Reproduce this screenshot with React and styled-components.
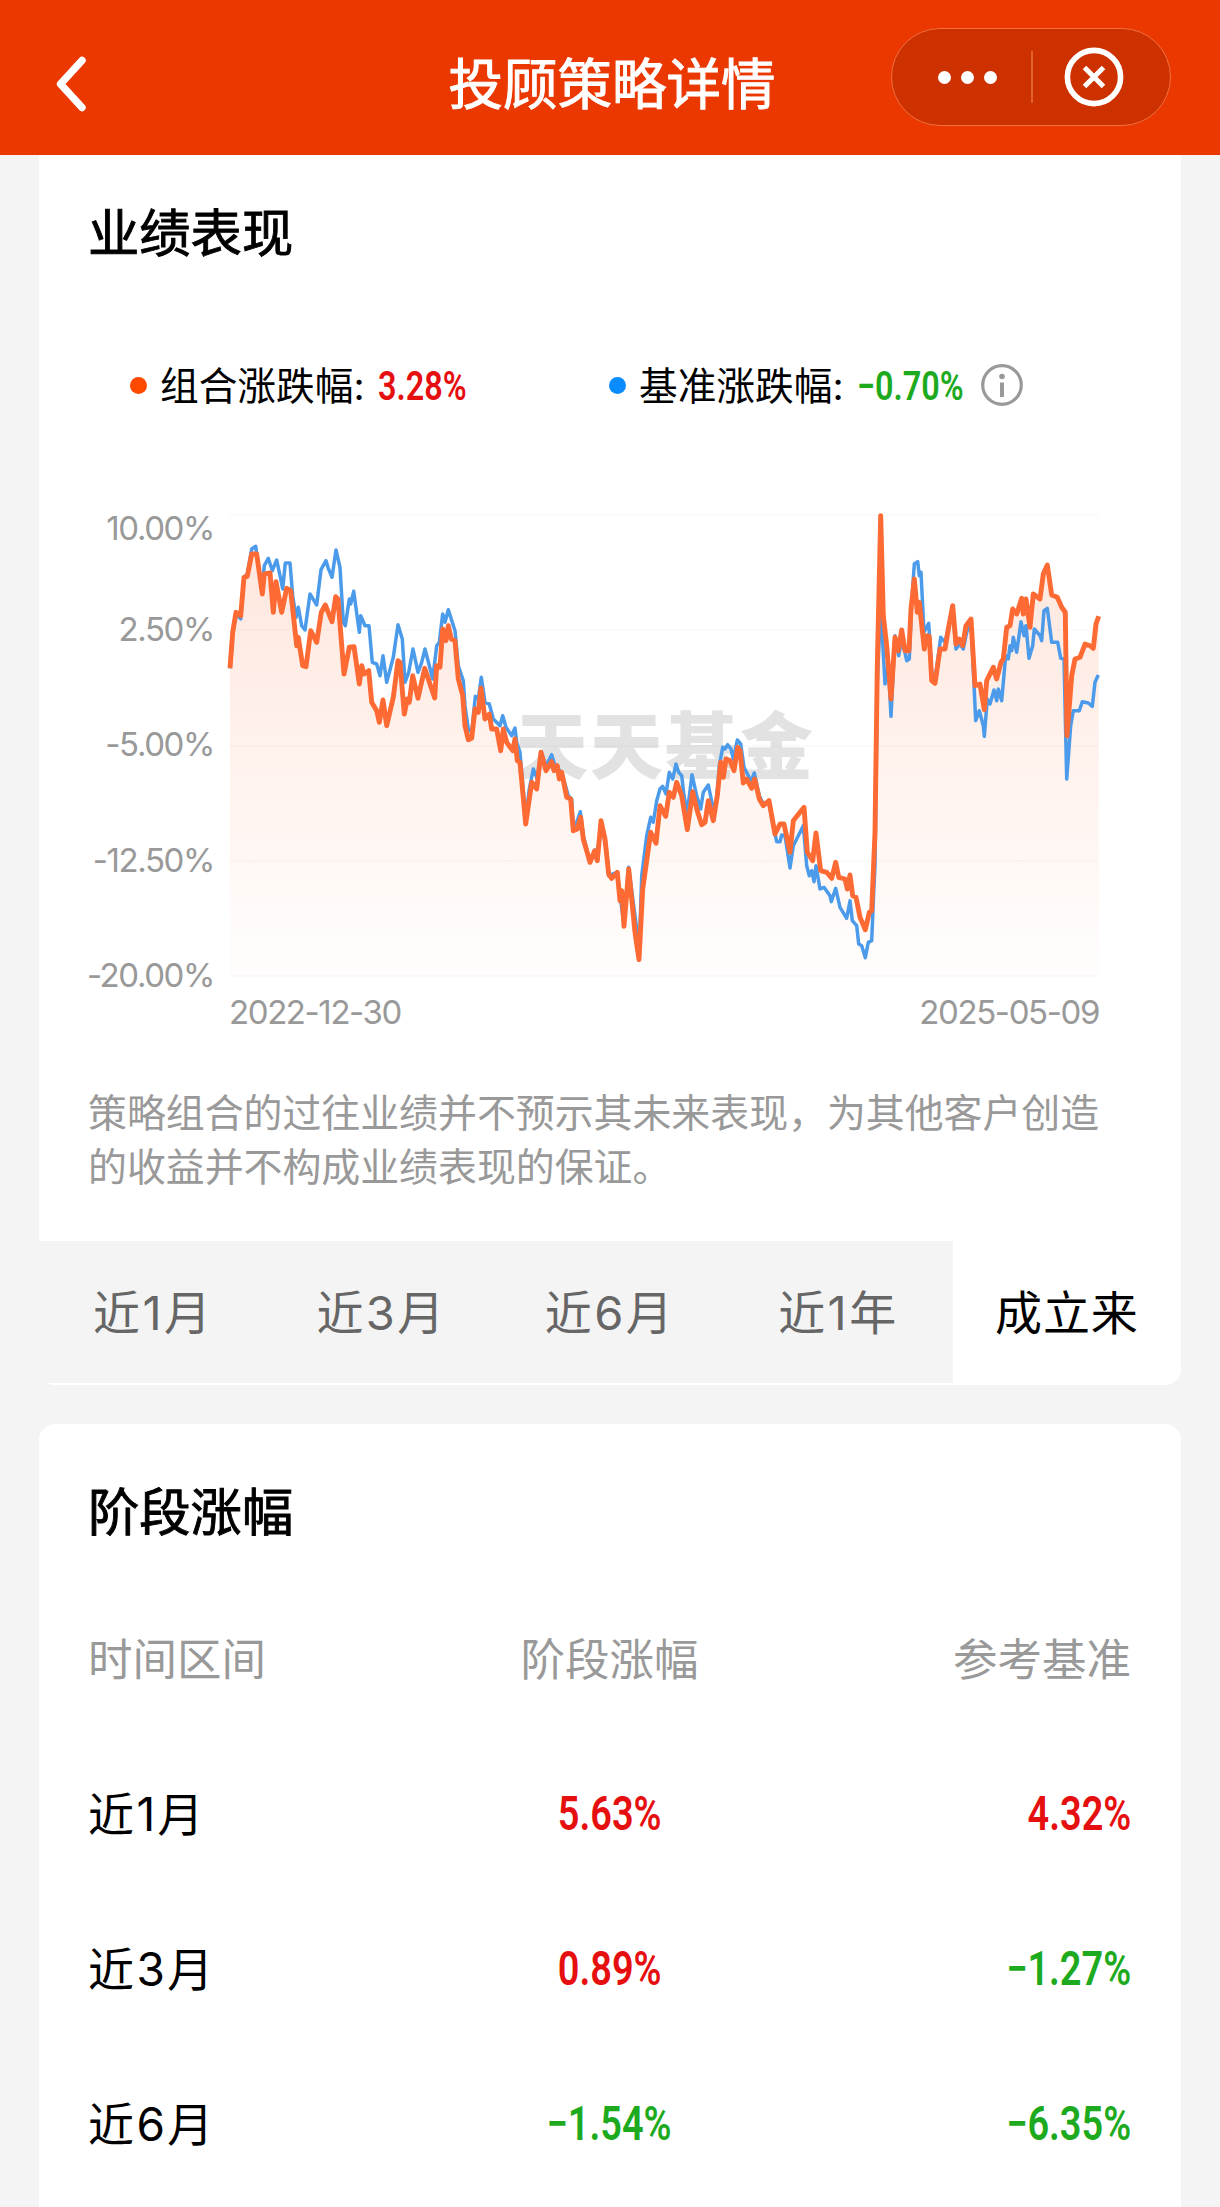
import React from "react";
import styled, { createGlobalStyle } from "styled-components";

const GlobalStyle = createGlobalStyle`
  * { box-sizing: border-box; }
  body {
    margin: 0;
    background: #f4f4f4;
    font-family: Inter, "Noto Sans CJK SC", sans-serif;
    color: #000;
  }
`;

const Screen = styled.div`
  width: 1220px;
  height: 2207px;
  overflow: hidden;
  display: flex;
  flex-direction: column;
  background: #f4f4f4;
`;

const NavBar = styled.header`
  height: 155px;
  flex: none;
  display: grid;
  grid-template-columns: 1fr auto 1fr;
  align-items: start;
  padding: 28px 49px 0 53px;
  background: #ea3800;
  color: #fff;
`;

const BackIcon = styled.svg`
  width: 34px;
  height: 58px;
  margin-top: 27px;
`;

const NavTitle = styled.h1`
  margin: 25px 0 0;
  font-size: 54.5px;
  line-height: 62px;
  font-weight: 400;
  -webkit-text-stroke: 1px currentColor;
`;

const Capsule = styled.div`
  justify-self: end;
  width: 280px;
  height: 98px;
  display: flex;
  align-items: center;
  border: 1.5px solid #f0703f;
  border-radius: 49px;
  background: #ce3100;
`;

const Dots = styled.div`
  width: 139px;
  display: flex;
  justify-content: center;
  gap: 10px;
  padding-left: 12px;
`;

const Dot = styled.span`
  width: ${(p) => p.$size}px;
  height: ${(p) => p.$size}px;
  flex: none;
  border-radius: 50%;
  background: ${(p) => p.$color};
`;

const CapsuleDivider = styled.span`
  width: 1.5px;
  height: 52px;
  background: #e0602f;
`;

const CloseIcon = styled.svg`
  width: 60px;
  height: 60px;
  margin-left: 31px;
`;

const Card = styled.section`
  width: 1142px;
  flex: none;
  margin-left: 39px;
  background: #fff;
  overflow: hidden;
  border-radius: ${(p) => p.$radius};
`;

const PerformanceCard = styled(Card)`
  height: 1230px;
  display: flex;
  flex-direction: column;
`;

const StageCard = styled(Card)`
  height: 900px;
  margin-top: 39px;
  padding: 58px 50px 0 49px;
`;

const CardTitle = styled.h2`
  margin: 0;
  font-size: 51.3px;
  line-height: 60px;
  font-weight: 400;
  -webkit-text-stroke: 0.9px currentColor;
`;

const PerformanceTitle = styled(CardTitle)`
  margin: 48px 0 0 49px;
`;

const Legend = styled.div`
  display: flex;
  height: 50px;
  margin: 97px 0 0 91px;
`;

const LegendItem = styled.div`
  display: flex;
  align-items: center;
  width: ${(p) => p.$width}px;
`;

const LegendLabel = styled.span`
  margin-left: 13px;
  width: 219px;
  padding-top: 2px;
  font-size: 38.7px;
  line-height: 50px;
  white-space: nowrap;
`;

const tone = { up: "#e60f0f", down: "#1eaa1e" };

const Figure = styled.span`
  display: inline-block;
  vertical-align: top;
  font-family: Roboto, sans-serif;
  font-weight: 600;
  font-size: ${(p) => p.$size}px;
  line-height: 60px;
  white-space: nowrap;
  color: ${(p) => tone[p.$tone]};
  transform: scaleX(0.79);
  transform-origin: ${(p) => p.$origin} center;
`;

const LegendFigure = styled(Figure)`
  width: ${(p) => p.$width}px;
  margin-left: -1px;
  padding-top: 2px;
`;

const InfoIcon = styled.svg`
  width: 44px;
  height: 44px;
  flex: none;
`;

const ChartArea = styled.div`
  display: flex;
  margin-top: 100px;
  height: 470px;
`;

const YAxis = styled.div`
  width: 175px;
  flex: none;
  display: grid;
  grid-template-rows: 101px 115px 116px 115px 30px;
  padding-top: 3px;
  text-align: right;
`;

const AxisLabel = styled.span`
  font-size: 33px;
  line-height: 30px;
  letter-spacing: -1.4px;
  color: #999;
  white-space: nowrap;
`;

const Plot = styled.svg`
  display: block;
  width: 876px;
  height: 470px;
  margin-left: 13px;
`;

const XAxis = styled.div`
  display: flex;
  justify-content: space-between;
  width: 870px;
  margin: 17px 0 0 190px;
`;

const Disclaimer = styled.p`
  margin: 59px 0 0 49px;
  width: 1030px;
  font-size: 38.9px;
  line-height: 54px;
  color: #999;
`;

const Tabs = styled.div`
  display: grid;
  grid-template-columns: repeat(5, 1fr);
  height: 142px;
  margin-top: auto;
  margin-bottom: 2px;
`;

const Tab = styled.button`
  border: 0;
  padding: 2px 0 0;
  font: inherit;
  font-size: 47px;
  line-height: 60px;
  letter-spacing: ${(p) => (p.$active ? 0.8 : 2.4)}px;
  color: ${(p) => (p.$active ? "#000" : "#666")};
  background: ${(p) => (p.$active ? "#fff" : "#f4f4f4")};
`;

const Row = styled.div`
  display: grid;
  grid-template-columns: repeat(3, 1fr);
  align-items: center;
  height: 155px;
`;

const HeaderRow = styled(Row)`
  height: 153px;
  margin-top: 41px;
  color: #999;
  font-size: 44.5px;
`;

const Cell = styled.div`
  text-align: ${(p) => p.$align || "left"};
  line-height: 60px;
`;

const PeriodCell = styled(Cell)`
  font-size: 46px;
  letter-spacing: 2.4px;
`;

/* Each run holds vertices at triple density, relative to its own origin. */
const portfolio = [
  [220, 500, "30,508 38,400 48,340 62,350 72,235 82,232 95,165 110,165 127,285 133,225 150,222 160,340 168,248 185,340 200,268 212,275 230,440 235,415 248,500 258,503 272,395 290,430 304,340 316,318 336,368 347,293 354,300 372,525 388,445 402,443 418,555 425,500 432,525 446,515 455,610 470,635 478,670 489,603 500,680 520,595 534,485 540,490 553,645 562,600 568,610 578,530 594,598 614,508 644,597 650,500 660,505 668,390 678,425 685,380 694,420 705,425 715,540 728,590 735,680 745,722 755,718 765,630 775,640 783,567 795,660 808,645 815,690 830,690 842,755 850,690 860,730 878,755"],
  [420, 590, "285,450 292,515 300,520 317,705 335,580 350,600 363,490 378,545 395,518 402,545 412,530 418,570 425,550 440,625 452,630 460,725 472,720 482,685 490,750 500,785 510,820 524,785 532,815 543,695 555,750 566,855 575,868 592,850 600,935 605,905 612,1012 626,840 645,1030"],
  [600, 680, "117,842 128,630 140,545 152,460 168,493 180,380 197,412 208,340 220,355 230,310 245,350 262,452 278,338 290,390 305,437 315,430 325,365 340,425 352,350 362,250 370,295 378,240 390,245 402,275 413,205 420,215 430,312 440,300 455,328 464,300 478,360 490,380 507,365 525,465 540,435 552,435 570,520 580,425 600,400 612,385 622,520 638,545 648,462 662,575 680,580 695,598 707,550 716,595 735,600 742,630 750,588 758,650 768,655 780,715 796,752 808,700"],
  [840, 500, "95,1235 105,1000 112,500 122,50 130,350 140,440 153,600 165,415 175,455 185,393 195,455 207,455 213,330 223,240 232,340 238,310 253,450 260,410 268,412 275,545 285,553 300,450 315,450 325,390 338,320 348,435 358,420 368,440 378,380 393,360 405,560 420,555 433,632 440,545 460,505 470,540 483,490 490,480 500,385 510,380 518,330 530,345 545,298 550,345 558,300 570,385 580,285 600,300 610,225 622,198 635,288 652,295 665,325 676,340 681,710 695,530 705,480 720,475 735,435 750,440 760,448 768,375 776,352"],
];

const benchmark = [
  [220, 500, "30,508 38,395 50,345 62,360 72,235 82,225 95,150 107,142 118,220 127,270 133,200 145,178 157,215 170,183 182,240 188,270 196,192 210,192 218,290 228,355 235,325 245,380 255,393 270,285 290,318 303,212 318,185 325,208 336,235 348,153 360,205 370,370 376,380 388,300 392,315 401,277 418,400 422,350 435,380 447,380 457,490 470,495 480,530 489,470 500,550 520,475 534,377 547,420 555,550 566,520 579,450 594,520 605,490 615,450 638,540 650,440 658,430 668,345 675,370 685,332 705,395 715,500 730,545 735,620 745,690 755,700 766,592 775,600 784,535 795,610 808,615 820,660 840,680 848,650 858,685 875,710 885,687 890,730"],
  [420, 590, "300,490 317,690 328,600 340,540 352,570 363,488 378,530 395,497 405,530 425,550 445,620 455,630 460,715 470,700 481,668 490,740 510,820 524,783 532,805 543,695 560,790 566,860 590,850 600,920 612,1005 626,835 650,1020"],
  [600, 680, "117,835 125,590 140,470 152,415 160,430 170,365 180,330 188,322 198,345 208,280 218,300 228,255 236,280 245,290 252,350 262,400 276,287 290,350 302,390 310,340 325,318 340,390 350,360 358,260 368,205 375,210 383,197 393,210 400,240 412,183 422,195 432,265 445,290 452,310 463,282 478,350 490,375 507,365 515,420 530,488 540,488 545,468 555,470 570,567 580,500 595,470 610,440 620,560 628,590 635,575 642,608 648,560 660,630 672,625 690,650 694,668 707,628 720,685 740,718 750,665 757,725 770,740 776,795 785,800 796,836 805,790 815,785 822,620"],
  [840, 500, "105,1100 112,550 122,320 135,555 145,500 153,652 165,410 176,470 186,420 200,485 208,480 215,310 223,195 233,188 238,230 243,220 252,400 266,373 275,520 285,545 302,415 315,430 338,330 348,450 360,435 370,450 380,400 393,365 407,665 418,635 430,680 433,712 442,600 450,615 462,573 470,605 475,570 485,605 497,470 505,480 510,440 515,455 520,415 530,460 543,368 552,410 558,380 567,478 578,440 583,390 600,410 605,425 612,335 622,328 635,430 653,430 662,478 672,480 680,840 692,680 700,635 718,635 727,608 745,612 757,622 765,550 775,528"],
];

const toPoints = (runs) =>
  runs
    .flatMap(([ox, oy, run]) =>
      run.split(" ").map((pair) => {
        const [x, y] = pair.split(",").map(Number);
        return `${(ox + x / 3).toFixed(1)},${(oy + y / 3).toFixed(1)}`;
      })
    )
    .join(" ");

const portfolioPoints = toPoints(portfolio);
const benchmarkPoints = toPoints(benchmark);
const gridLines = [516, 631, 747, 862, 977];
const yLabels = ["10.00%", "2.50%", "-5.00%", "-12.50%", "-20.00%"];
const tabs = ["近1月", "近3月", "近6月", "近1年", "成立来"];
const rows = [
  { period: "近1月", gain: "5.63%", gainTone: "up", base: "4.32%", baseTone: "up" },
  { period: "近3月", gain: "0.89%", gainTone: "up", base: "−1.27%", baseTone: "down" },
  { period: "近6月", gain: "−1.54%", gainTone: "down", base: "−6.35%", baseTone: "down" },
];

function TrendChart() {
  return (
    <Plot viewBox="227 511 876 470">
      <defs>
        <linearGradient id="fade" gradientUnits="userSpaceOnUse" x1="0" y1="516" x2="0" y2="977">
          <stop offset="0" stopColor="#ff6a30" stopOpacity="0.17" />
          <stop offset="0.45" stopColor="#ff6a30" stopOpacity="0.1" />
          <stop offset="1" stopColor="#ff6a30" stopOpacity="0.01" />
        </linearGradient>
      </defs>
      {gridLines.map((y) => (
        <line key={y} x1="229" x2="1099" y1={y} y2={y} stroke="#f9f9f9" strokeWidth="1.5" />
      ))}
      <polygon points={`230,977 ${portfolioPoints} 1099,977`} fill="url(#fade)" />
      <text
        x="515"
        y="774"
        fontFamily="'Noto Sans CJK SC', sans-serif"
        fontSize="73"
        fontWeight="900"
        letterSpacing="2"
        fill="#bbbbbb"
        fillOpacity="0.42"
      >
        天天基金
      </text>
      <polyline points={benchmarkPoints} fill="none" stroke="#4c9bea" strokeWidth="3.5" strokeLinejoin="round" />
      <polyline points={portfolioPoints} fill="none" stroke="#fd6a33" strokeWidth="4.9" strokeLinejoin="round" />
    </Plot>
  );
}

export default function App() {
  return (
    <Screen>
      <GlobalStyle />
      <NavBar>
        <BackIcon viewBox="0 0 34 58" fill="none" stroke="#fff" strokeWidth="7.4" strokeLinecap="round" strokeLinejoin="round">
          <path d="M29 5.5 7.5 29 29 52.5" />
        </BackIcon>
        <NavTitle>投顾策略详情</NavTitle>
        <Capsule>
          <Dots>
            <Dot $size={13} $color="#fff" />
            <Dot $size={13} $color="#fff" />
            <Dot $size={13} $color="#fff" />
          </Dots>
          <CapsuleDivider />
          <CloseIcon viewBox="0 0 60 60" fill="none" stroke="#fff" strokeWidth="5.6">
            <circle cx="30" cy="30" r="26.6" />
            <path d="M20.5 20.5 39.5 39.5M39.5 20.5 20.5 39.5" strokeWidth="5" />
          </CloseIcon>
        </Capsule>
      </NavBar>

      <PerformanceCard $radius="0 0 16px 16px">
        <PerformanceTitle>业绩表现</PerformanceTitle>
        <Legend>
          <LegendItem $width={479}>
            <Dot $size={17} $color="#ff4800" />
            <LegendLabel>组合涨跌幅:</LegendLabel>
            <LegendFigure $size={41} $tone="up" $origin="left" $width={110}>3.28%</LegendFigure>
          </LegendItem>
          <LegendItem $width={420}>
            <Dot $size={17} $color="#0a8cff" />
            <LegendLabel>基准涨跌幅:</LegendLabel>
            <LegendFigure $size={41} $tone="down" $origin="left" $width={123}>−0.70%</LegendFigure>
            <InfoIcon viewBox="0 0 44 44" fill="none" stroke="#999">
              <circle cx="22" cy="22" r="19.3" strokeWidth="3.2" />
              <circle cx="22" cy="13.5" r="2.8" fill="#999" stroke="none" />
              <path d="M22 19.5V34" strokeWidth="4" />
            </InfoIcon>
          </LegendItem>
        </Legend>
        <ChartArea>
          <YAxis>
            {yLabels.map((label) => (
              <AxisLabel key={label}>{label}</AxisLabel>
            ))}
          </YAxis>
          <TrendChart />
        </ChartArea>
        <XAxis>
          <AxisLabel>2022-12-30</AxisLabel>
          <AxisLabel>2025-05-09</AxisLabel>
        </XAxis>
        <Disclaimer>策略组合的过往业绩并不预示其未来表现，为其他客户创造的收益并不构成业绩表现的保证。</Disclaimer>
        <Tabs>
          {tabs.map((tab) => (
            <Tab key={tab} $active={tab === "成立来"}>{tab}</Tab>
          ))}
        </Tabs>
      </PerformanceCard>

      <StageCard $radius="16px 16px 0 0">
        <CardTitle>阶段涨幅</CardTitle>
        <HeaderRow>
          <Cell>时间区间</Cell>
          <Cell $align="center">阶段涨幅</Cell>
          <Cell $align="right">参考基准</Cell>
        </HeaderRow>
        {rows.map((row) => (
          <Row key={row.period}>
            <PeriodCell>{row.period}</PeriodCell>
            <Cell $align="center">
              <Figure $size={48} $tone={row.gainTone} $origin="center">{row.gain}</Figure>
            </Cell>
            <Cell $align="right">
              <Figure $size={48} $tone={row.baseTone} $origin="right">{row.base}</Figure>
            </Cell>
          </Row>
        ))}
      </StageCard>
    </Screen>
  );
}
